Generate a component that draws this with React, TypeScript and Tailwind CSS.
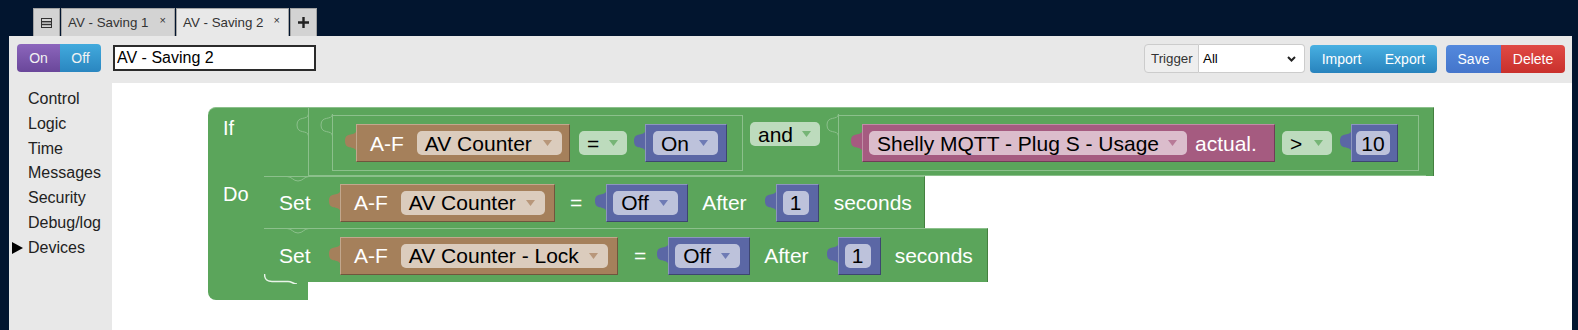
import React from 'react';

type Kind = 'brown' | 'blue' | 'pink';

// colours of the value blocks (Blockly geras look)
const KINDS: Record<Kind, { body: string; field: string; fill: string; arrow: string; dark: string }> = {
  brown: {
    body: 'bg-[#a5805b] border border-[#c2a78d] border-r-[#6f563d] border-b-[#6f563d]',
    field: 'bg-[#dbccbd]',
    fill: '#a5805b',
    arrow: '#b8977a',
    dark: '#6f563d',
  },
  blue: {
    body: 'bg-[#5b67a5] border border-[#8c95c0] border-r-[#3d4670] border-b-[#3d4670]',
    field: 'bg-[#bdc2db]',
    fill: '#5b67a5',
    arrow: '#6f7bb5',
    dark: '#3d4670',
  },
  pink: {
    body: 'bg-[#a55b80] border border-[#c08ca6] border-r-[#703d57] border-b-[#703d57]',
    field: 'bg-[#dbbdcc]',
    fill: '#a55b80',
    arrow: '#b87a98',
    dark: '#703d57',
  },
};

const GREEN = '#5ba55b';

// puzzle tab on the left side of a value block
function PuzzleTab({ fill, stroke }: { fill: string; stroke?: string }) {
  return (
    <svg width="11" height="22" viewBox="0 0 11 22" className="mt-[6px] shrink-0 overflow-visible">
      <path
        d="M11.5 0 C11 7 0 1 0 11 C0 21 11 15 11.5 22 Z"
        fill={fill}
        stroke={stroke ?? 'none'}
        strokeWidth={stroke ? 1 : 0}
      />
    </svg>
  );
}

function Arrow({ fill }: { fill: string }) {
  return (
    <svg width="9" height="6" viewBox="0 0 9 6" className="shrink-0">
      <path d="M0 0 H9 L4.5 6 Z" fill={fill} />
    </svg>
  );
}

function Field({ kind, text, width, arrow = true }: { kind: Kind; text: string; width: string; arrow?: boolean }) {
  const k = KINDS[kind];
  return (
    <div
      className={`h-[24px] rounded-[5px] flex items-center shrink-0 ${k.field} ${width} ${
        arrow ? 'justify-between pl-[8px] pr-[10px]' : 'justify-center'
      }`}
    >
      <span className="text-[21px] leading-none text-black whitespace-nowrap">{text}</span>
      {arrow && <Arrow fill={k.arrow} />}
    </div>
  );
}

function GreenField({ text, width }: { text: string; width: string }) {
  return (
    <div className={`h-[24px] rounded-[5px] flex items-center justify-between pl-[8px] pr-[9px] shrink-0 bg-[#bddbbd] ${width}`}>
      <span className="text-[21px] leading-none text-black">{text}</span>
      <Arrow fill="#76b576" />
    </div>
  );
}

function ValueBlock({ kind, width, className, children }: { kind: Kind; width: string; className?: string; children: React.ReactNode }) {
  const k = KINDS[kind];
  return (
    <div className={`flex items-start shrink-0 ${className ?? ''}`}>
      <PuzzleTab fill={k.fill} />
      <div className={`h-[38px] flex items-center ${k.body} ${width}`}>{children}</div>
    </div>
  );
}

function Device({ name, fieldW, width }: { name: string; fieldW: string; width: string }) {
  return (
    <ValueBlock kind="brown" width={width}>
      <span className="pl-[13px] text-[21px] leading-none text-white">A-F</span>
      <div className="ml-[13px]">
        <Field kind="brown" text={name} width={fieldW} />
      </div>
    </ValueBlock>
  );
}

// notch of a statement block (previous connection)
function Notch() {
  return (
    <svg width="22" height="6" viewBox="0 0 22 6" className="absolute left-[23px] top-[-1px]">
      <path d="M0 0.5 C5 0.5 6 5 11 5 C16 5 17 0.5 22 0.5" fill="none" stroke="#8cc08c" strokeWidth="1" />
    </svg>
  );
}

function SetRow({
  width,
  height,
  device,
  deviceW,
  fieldW,
  gaps,
}: {
  width: string;
  height: string;
  device: string;
  deviceW: string;
  fieldW: string;
  gaps: [string, string, string, string, string];
}) {
  return (
    <div className={`relative flex items-center bg-[#5ba55b] border-t border-t-[#8cc08c] border-r border-r-[#44803f] ${width} ${height}`}>
      <Notch />
      <span className="w-[65px] pl-[15px] text-[21px] leading-none">Set</span>
      <Device name={device} fieldW={fieldW} width={deviceW} />
      <span className={`text-[21px] leading-none ${gaps[0]}`}>=</span>
      <ValueBlock kind="blue" width="w-[82px]" className={gaps[1]}>
        <div className="pl-[6px]">
          <Field kind="blue" text="Off" width="w-[65px]" />
        </div>
      </ValueBlock>
      <span className={`text-[21px] leading-none ${gaps[2]}`}>After</span>
      <ValueBlock kind="blue" width="w-[43px]" className={gaps[3]}>
        <div className="pl-[6px]">
          <Field kind="blue" text="1" width="w-[26px]" arrow={false} />
        </div>
      </ValueBlock>
      <span className={`text-[21px] leading-none ${gaps[4]}`}>seconds</span>
    </div>
  );
}

function IfBlock() {
  return (
    <div className="absolute left-[96px] top-[24px] flex flex-col text-white">
      {/* If row */}
      <div className="flex w-[1226px] h-[69px] bg-[#5ba55b] rounded-tl-[8px] border-t border-t-[#8cc08c] border-r border-r-[#44803f]">
        <div className="w-[89px] pl-[15px] pt-[9px] text-[20px] leading-[23px]">If</div>
        <PuzzleTab fill={GREEN} stroke="#8cc08c" />
        {/* and block */}
        <div className="w-[1118px] h-[68px] border-l border-b border-[#8cc08c] flex items-start pl-[12px]">
          {/* compare 1 */}
          <div className="flex items-start shrink-0">
            <PuzzleTab fill={GREEN} stroke="#8cc08c" />
            <div className="w-[411px] h-[56px] mt-[7px] border border-[#8cc08c] flex items-center pl-[12px]">
              <Device name="AV Counter" fieldW="w-[145px]" width="w-[214px]" />
              <div className="ml-[9px]">
                <GreenField text="=" width="w-[48px]" />
              </div>
              <ValueBlock kind="blue" width="w-[82px]" className="ml-[7px]">
                <div className="pl-[7px]">
                  <Field kind="blue" text="On" width="w-[65px]" />
                </div>
              </ValueBlock>
            </div>
          </div>
          <div className="ml-[7px] mt-[14px]">
            <GreenField text="and" width="w-[70px]" />
          </div>
          {/* compare 2 */}
          <div className="flex items-start shrink-0 ml-[7px]">
            <PuzzleTab fill={GREEN} stroke="#8cc08c" />
            <div className="w-[581px] h-[56px] mt-[7px] border border-[#8cc08c] flex items-center pl-[12px]">
              <ValueBlock kind="pink" width="w-[413px]">
                <div className="pl-[6px]">
                  <Field kind="pink" text="Shelly MQTT - Plug S - Usage" width="w-[318px]" />
                </div>
                <span className="ml-[8px] text-[21px] leading-none text-white">actual.</span>
              </ValueBlock>
              <div className="ml-[7px]">
                <GreenField text=">" width="w-[50px]" />
              </div>
              <ValueBlock kind="blue" width="w-[47px]" className="ml-[8px]">
                <div className="pl-[4px]">
                  <Field kind="blue" text="10" width="w-[34px]" arrow={false} />
                </div>
              </ValueBlock>
            </div>
          </div>
        </div>
      </div>

      {/* Do section */}
      <div className="flex">
        <div className="w-[56px] bg-[#5ba55b] pl-[15px] pt-[7px] text-[20px] leading-[23px]">Do</div>
        <div className="flex flex-col">
          <SetRow
            width="w-[661px]"
            height="h-[52px]"
            device="AV Counter"
            deviceW="w-[215px]"
            fieldW="w-[144px]"
            gaps={['ml-[15px]', 'ml-[13px]', 'ml-[14px]', 'ml-[18px]', 'ml-[15px]']}
          />
          <SetRow
            width="w-[724px]"
            height="h-[54px]"
            device="AV Counter - Lock"
            deviceW="w-[278px]"
            fieldW="w-[207px]"
            gaps={['ml-[16px]', 'ml-[11px]', 'ml-[14px]', 'ml-[18px]', 'ml-[14px]']}
          />
        </div>
      </div>
      <div className="relative w-[100px] h-[18px] bg-[#5ba55b] rounded-bl-[8px]">
        <svg width="44" height="10" viewBox="0 0 44 10" className="absolute left-[56px] top-[-8px]">
          <path d="M0.5 0 C0.5 5 2 7.5 8 7.5 H24 C28 7.5 29 10 33 10" fill="none" stroke="#e9f4e9" strokeWidth="1.5" />
        </svg>
      </div>
    </div>
  );
}

function TabStrip() {
  return (
    <div className="h-[36px] shrink-0 flex items-end pl-[33px] gap-[1px] text-[13.33px] text-[#333]">
      <div className="w-[27px] h-[28px] bg-[#d3d3d3] border border-b-0 border-[#a3a3a3] flex items-center justify-center">
        <svg width="11" height="10" viewBox="0 0 11 10">
          <rect x="0.5" y="0.5" width="10" height="9" fill="none" stroke="#333" />
          <rect x="0.5" y="3" width="10" height="1.4" fill="#333" />
          <rect x="0.5" y="5.8" width="10" height="1.4" fill="#333" />
        </svg>
      </div>
      <div className="w-[114px] h-[28px] bg-[#d3d3d3] border border-b-0 border-[#a3a3a3] flex items-center justify-between pl-[6px] pr-[8px]">
        <span>AV - Saving 1</span>
        <span className="text-[11px] leading-none -mt-[5px]">×</span>
      </div>
      <div className="w-[113px] h-[28px] bg-[#e8e8e8] border border-b-0 border-[#a3a3a3] flex items-center justify-between pl-[6px] pr-[8px]">
        <span>AV - Saving 2</span>
        <span className="text-[11px] leading-none -mt-[5px]">×</span>
      </div>
      <div className="w-[27px] h-[28px] bg-[#d3d3d3] border border-b-0 border-[#a3a3a3] flex items-center justify-center">
        <svg width="11" height="11" viewBox="0 0 11 11">
          <path d="M5.5 0 V11 M0 5.5 H11" stroke="#222" strokeWidth="2.4" />
        </svg>
      </div>
    </div>
  );
}

function Toolbar() {
  return (
    <div className="h-[47px] shrink-0 flex items-start pt-[8px] pl-[8px] pr-[7px]">
      <div className="flex h-[28px] rounded-[4px] overflow-hidden text-[14px] text-[#f2f2f2]">
        <div className="w-[43px] flex items-center justify-center bg-gradient-to-b from-[#8c66bc] to-[#6a479a]">On</div>
        <div className="w-[41px] flex items-center justify-center bg-gradient-to-b from-[#42aadd] to-[#2a86c0]">Off</div>
      </div>
      <input
        readOnly
        value="AV - Saving 2"
        className="ml-[12px] mt-[1px] w-[203px] h-[26px] border-2 border-[#2b2b2b] bg-white pl-[2px] text-[16px] text-black outline-none"
      />
      <div className="ml-auto flex h-[29px] text-[13.33px] text-[#333]">
        <div className="w-[55px] flex items-center pl-[6px] bg-[#eeeeee] border border-[#cccccc] rounded-l-[4px]">Trigger</div>
        <div className="w-[106px] flex items-center justify-between pl-[4px] pr-[8px] bg-white border border-l-0 border-[#cccccc] rounded-r-[4px] text-black">
          <span>All</span>
          <svg width="9" height="6" viewBox="0 0 9 6">
            <path d="M1 1 L4.5 4.5 L8 1" fill="none" stroke="#222" strokeWidth="2" />
          </svg>
        </div>
      </div>
      <div className="ml-[5px] mt-[1px] flex h-[28px] w-[127px] rounded-[4px] overflow-hidden text-[14px] text-white bg-gradient-to-b from-[#48b0e2] to-[#2883bd]">
        <div className="w-[63px] flex items-center justify-center">Import</div>
        <div className="w-[64px] flex items-center justify-center">Export</div>
      </div>
      <div className="ml-[9px] mt-[1px] flex h-[28px] rounded-[4px] overflow-hidden text-[14px] text-white">
        <div className="w-[55px] flex items-center justify-center bg-gradient-to-b from-[#5489dd] to-[#4475cb]">Save</div>
        <div className="w-[64px] flex items-center justify-center bg-gradient-to-b from-[#e04a45] to-[#c9302c]">Delete</div>
      </div>
    </div>
  );
}

const CATEGORIES = ['Control', 'Logic', 'Time', 'Messages', 'Security', 'Debug/log', 'Devices'];

function Sidebar() {
  return (
    <div className="w-[103px] shrink-0 pt-[4px] text-[16px] leading-[24.8px] text-[#222]">
      {CATEGORIES.map((c) => (
        <div key={c} className="flex items-center pl-[3px]">
          <div className="w-[16px] flex items-center">
            {c === 'Devices' && (
              <svg width="11" height="12" viewBox="0 0 11 12">
                <path d="M0 0 L11 6 L0 12 Z" fill="#000" />
              </svg>
            )}
          </div>
          <span>{c}</span>
        </div>
      ))}
    </div>
  );
}

export default function App() {
  return (
    <div className="w-[1578px] h-[330px] bg-[#02152f] flex flex-col overflow-hidden font-['Liberation_Sans',Arial,sans-serif]">
      <TabStrip />
      <div className="ml-[9px] w-[1563px] flex-1 bg-[#e8e8e8] flex flex-col">
        <Toolbar />
        <div className="flex flex-1">
          <Sidebar />
          <div className="flex-1 bg-white relative">
            <IfBlock />
          </div>
        </div>
      </div>
    </div>
  );
}
